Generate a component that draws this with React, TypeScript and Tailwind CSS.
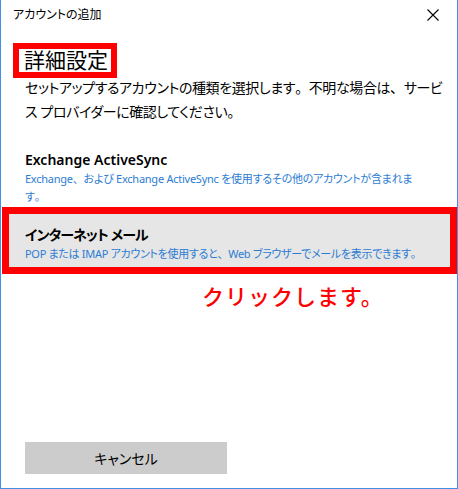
import React from 'react';

const jp = "font-['Noto_Sans','Noto_Sans_CJK_JP',sans-serif] [font-feature-settings:'palt']";

// palt narrows kana; keep 、。 at full width like the original UI font
const T = ({ s }: { s: string }) => (
  <>
    {s.split(/([、。])/).map((part, i) =>
      part === '、' || part === '。' ? (
        <span key={i} className="[font-feature-settings:normal]">{part}</span>
      ) : (
        <React.Fragment key={i}>{part}</React.Fragment>
      )
    )}
  </>
);

const CloseIcon = () => (
  <svg width="12" height="12" viewBox="0 0 12 12" className="block">
    <path d="M0.5 0.5 L11.5 11.5 M11.5 0.5 L0.5 11.5" stroke="#000" strokeWidth="1.1" fill="none" />
  </svg>
);

export default function App() {
  return (
    <div className={`w-[458px] h-[489px] bg-white border-x border-b border-[#4190e5] flex flex-col text-black ${jp}`}>
      {/* Title bar */}
      <div className="h-[30px] flex items-center justify-between pl-[12px] pr-[18px] shrink-0">
        <span className="text-[12px] leading-none">アカウントの追加</span>
        <CloseIcon />
      </div>

      {/* Heading with highlight */}
      <div className="mt-[13px] ml-[12px] self-start border-[6px] border-[#ff0000] pl-[5px] pr-[3px]">
        <span className="block text-[21px] leading-[23px]">詳細設定</span>
      </div>

      <div className="-mt-[2px] pl-[24px] pr-[20px]">
        <p className="text-[14px] leading-[24px] whitespace-nowrap tracking-[-0.4px]">
          <T s="セットアップするアカウントの種類を選択します。不明な場合は、サービ" />
          <br />
          <T s="ス プロバイダーに確認してください。" />
        </p>

        <div className="mt-[26px]">
          <div className="text-[14px] leading-[20px] font-semibold">Exchange ActiveSync</div>
          <div className="text-[11px] leading-[18px] text-[#2b7cd3] whitespace-nowrap tracking-[-0.25px]">
            <T s="Exchange、および Exchange ActiveSync を使用するその他のアカウントが含まれま" />
            <br />
            <T s="す。" />
          </div>
        </div>
      </div>

      {/* Selected option */}
      <div className="mt-[1px] ml-[1px] border-[7px] border-[#ff0000] bg-[#e6e6e6] pt-[11px] pb-[4px] pl-[16px]">
        <div className="text-[14px] leading-[20px] font-semibold tracking-[-0.9px]">
          インターネット<span className="ml-[3px]">メール</span>
        </div>
        <div className="text-[11px] leading-[18px] text-[#2b7cd3] whitespace-nowrap tracking-[-0.3px]">
          <T s="POP または IMAP アカウントを使用すると、Web ブラウザーでメールを表示できます。" />
        </div>
      </div>

      <div className="mt-[7px] pl-[201px] text-[22px] leading-[30px] text-[#ff0000] font-medium tracking-[1px] [font-feature-settings:normal]">
        クリックします。
      </div>

      <div className="mt-auto mb-[14px] ml-[24px]">
        <button className="w-[202px] h-[32px] bg-[#cccccc] text-[14px] flex items-center justify-center">
          キャンセル
        </button>
      </div>
    </div>
  );
}
